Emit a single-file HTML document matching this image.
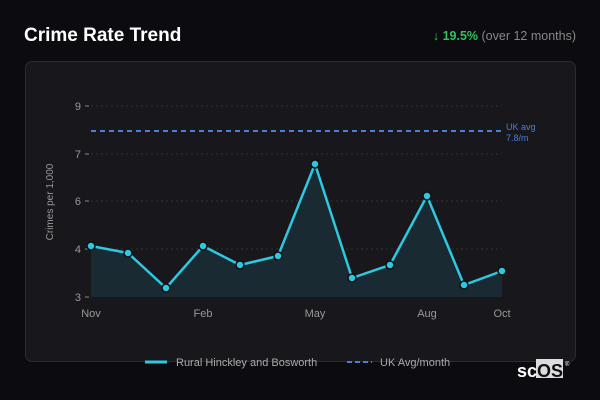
<!DOCTYPE html>
<html><head><style>
body{margin:0;width:600px;height:400px;background:#0b0b10;font-family:"Liberation Sans",sans-serif;overflow:hidden;position:relative}
.t{position:absolute;left:24px;top:25px;color:#fff;font-size:19px;font-weight:bold}
.s{position:absolute;right:24px;top:29px;font-size:12.5px;color:#888}
.s b{color:#2ec25a}
.card{position:absolute;left:25px;top:61px;width:549px;height:299px;background:#17171c;border:1px solid #2b2b31;border-radius:7px}
svg{position:absolute;left:0;top:0}
</style></head><body>
<div class="t">Crime Rate Trend</div>
<div class="s"><b>↓ 19.5%</b> (over 12 months)</div>
<div class="card"></div>
<svg width="600" height="400" font-family="Liberation Sans, sans-serif">
<g stroke="#333" stroke-dasharray="2,3" stroke-width="1">
<line x1="91" x2="502" y1="106" y2="106"/><line x1="91" x2="502" y1="154" y2="154"/><line x1="91" x2="502" y1="201" y2="201"/><line x1="91" x2="502" y1="249" y2="249"/>
</g>
<g stroke="#888"><line x1="85" x2="89" y1="106" y2="106"/><line x1="85" x2="89" y1="154" y2="154"/><line x1="85" x2="89" y1="201" y2="201"/><line x1="85" x2="89" y1="249" y2="249"/><line x1="85" x2="89" y1="297" y2="297"/></g>
<g fill="#999" font-size="11" text-anchor="end"><text x="81" y="110">9</text><text x="81" y="158">7</text><text x="81" y="205">6</text><text x="81" y="253">4</text><text x="81" y="301">3</text></g>
<text transform="translate(53,202) rotate(-90)" fill="#999" font-size="10" text-anchor="middle">Crimes per 1,000</text>
<line x1="91" x2="502" y1="131" y2="131" stroke="#4a7fd8" stroke-width="2" stroke-dasharray="5,4"/>
<text x="506" y="130" fill="#4a7fd8" font-size="9">UK avg</text><text x="506" y="141" fill="#4a7fd8" font-size="9">7.8/m</text>
<path d="M91,246 L128,253 L166,288 L203,246 L240,265 L278,256 L315,164 L352,278 L390,265 L427,196 L464,285 L502,271 L502,297 L91,297Z" fill="#1a2a32"/>
<polyline points="91,246 128,253 166,288 203,246 240,265 278,256 315,164 352,278 390,265 427,196 464,285 502,271" fill="none" stroke="#2ec8e0" stroke-width="2.5" stroke-linejoin="round"/>
<g fill="#2ec8e0" stroke="#111" stroke-width="1.5">
<circle cx="91" cy="246" r="4"/><circle cx="128" cy="253" r="4"/><circle cx="166" cy="288" r="4"/><circle cx="203" cy="246" r="4"/><circle cx="240" cy="265" r="4"/><circle cx="278" cy="256" r="4"/><circle cx="315" cy="164" r="4"/><circle cx="352" cy="278" r="4"/><circle cx="390" cy="265" r="4"/><circle cx="427" cy="196" r="4"/><circle cx="464" cy="285" r="4"/><circle cx="502" cy="271" r="4"/>
</g>
<g fill="#999" font-size="11" text-anchor="middle"><text x="91" y="317">Nov</text><text x="203" y="317">Feb</text><text x="315" y="317">May</text><text x="427" y="317">Aug</text><text x="502" y="317">Oct</text></g>
<line x1="145" x2="167" y1="362" y2="362" stroke="#2ec8e0" stroke-width="3"/>
<text x="176" y="366" fill="#aaa" font-size="11">Rural Hinckley and Bosworth</text>
<line x1="347" x2="372" y1="362" y2="362" stroke="#4a7fd8" stroke-width="2" stroke-dasharray="5,3"/>
<text x="380" y="366" fill="#aaa" font-size="11">UK Avg/month</text>
<rect x="536" y="359" width="27" height="19" fill="#ddd"/>
<text x="517" y="377" fill="#fff" font-size="18" font-weight="bold">sc</text>
<text x="537" y="377" fill="#111" font-size="18" font-weight="bold">OS</text>
<text x="565" y="366" fill="#fff" font-size="6">®</text>
</svg>
</body></html>
